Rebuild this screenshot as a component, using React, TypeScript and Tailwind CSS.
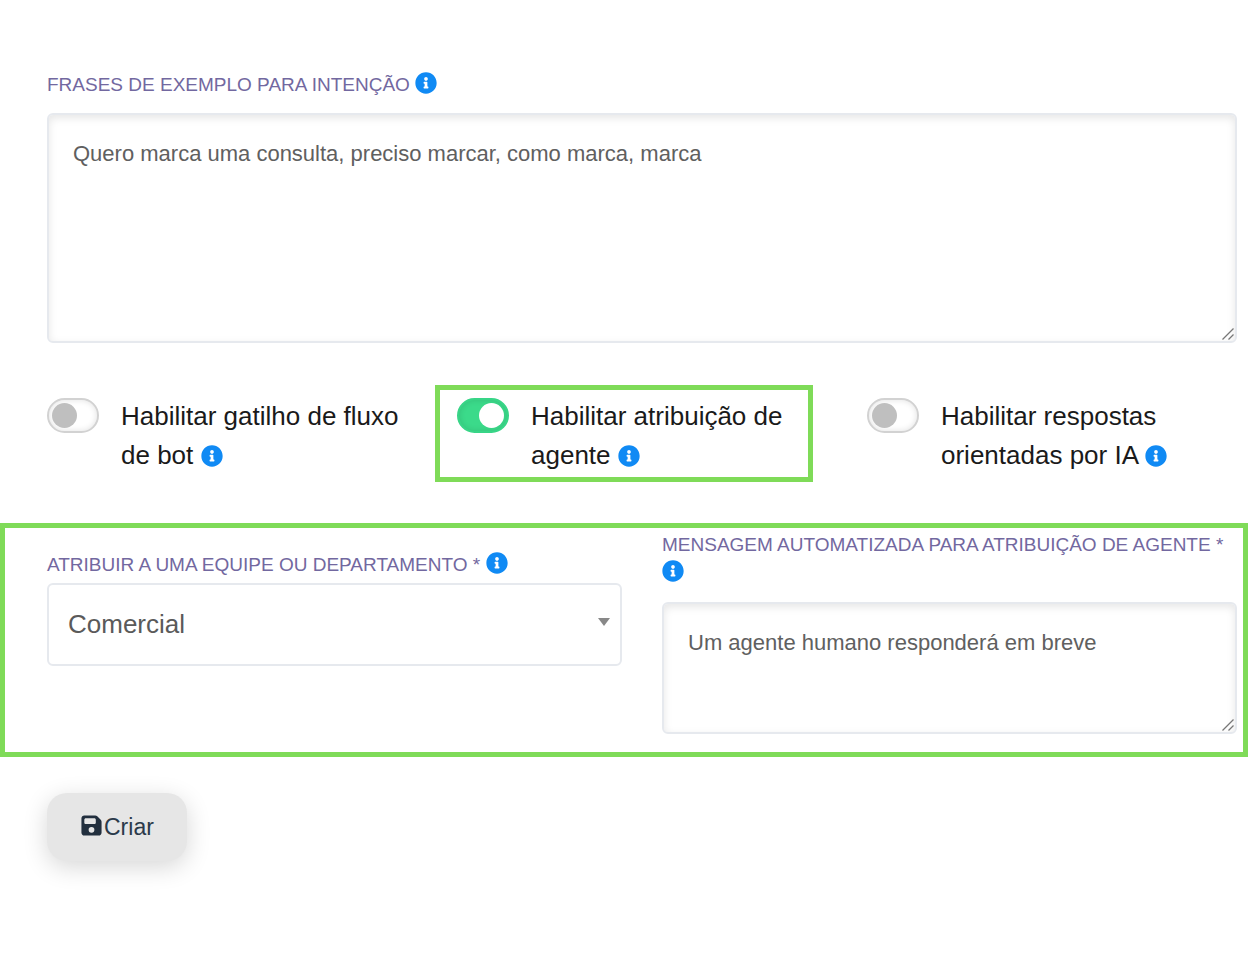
import { useState, type ReactNode } from "react";
import { FaInfoCircle } from "react-icons/fa";
import { FaFloppyDisk } from "react-icons/fa6";

function InfoIcon() {
  return (
    <FaInfoCircle
      aria-hidden="true"
      className="inline-block size-[22px] align-[-3px] text-[#108af4]"
    />
  );
}

interface FieldLabelProps {
  htmlFor: string;
  className?: string;
  children: ReactNode;
}

function FieldLabel({ htmlFor, className = "", children }: FieldLabelProps) {
  return (
    <label
      htmlFor={htmlFor}
      className={`block text-[19px] leading-7 text-[#7268a0] uppercase ${className}`}
    >
      {children} <InfoIcon />
    </label>
  );
}

interface MessageBoxProps {
  id: string;
  defaultValue: string;
  className: string;
}

function MessageBox({ id, defaultValue, className }: MessageBoxProps) {
  return (
    <div className="relative">
      <textarea
        id={id}
        defaultValue={defaultValue}
        spellCheck={false}
        className={`
          block w-full resize-y rounded-md border-2 border-[#e6e9ee] bg-white
          px-6 py-5 text-[22px] leading-[38px] text-[#606060] outline-none
          shadow-[inset_0_3px_8px_rgba(0,0,0,0.1)]
          [&::-webkit-resizer]:hidden
          ${className}
        `}
      />
      {/* Resize grip */}
      <svg
        viewBox="0 0 12 12"
        aria-hidden="true"
        className="pointer-events-none absolute right-[3px] bottom-[3px] size-3 stroke-[#777]"
      >
        <path d="M0.5 11.5 11.5 0.5M6.5 11.5 11.5 6.5" strokeWidth="1.3" fill="none" />
      </svg>
    </div>
  );
}

interface ToggleProps {
  id: string;
  label: string;
  checked: boolean;
  highlighted?: boolean;
  onChange: (checked: boolean) => void;
}

function Toggle({ id, label, checked, highlighted, onChange }: ToggleProps) {
  return (
    <div className="relative flex items-start">
      {/* Frame around the step being explained */}
      {highlighted && (
        <div className="pointer-events-none absolute -top-3 right-3.5 -bottom-[7px] -left-[22px] border-5 border-[#7fdb58]" />
      )}
      <input
        id={id}
        type="checkbox"
        checked={checked}
        onChange={(e) => onChange(e.target.checked)}
        className="
          mt-px flex h-[35px] w-[52px] shrink-0 appearance-none items-center
          rounded-full border-2 border-[#d2d2d2] bg-white px-[3px]
          shadow-[inset_0_0_6px_rgba(0,0,0,0.12)]
          before:size-[25px] before:rounded-full before:bg-[#bfbfbf] before:content-['']
          checked:justify-end checked:border-[#38d587] checked:bg-[#3bda8a]
          checked:before:bg-white
        "
      />
      <label htmlFor={id} className="ml-[22px] text-[26px] leading-[39px] text-[#1a1a1a]">
        {label} <InfoIcon />
      </label>
    </div>
  );
}

export default function App() {
  const [botFlow, setBotFlow] = useState(false);
  const [assignAgent, setAssignAgent] = useState(true);
  const [aiReplies, setAiReplies] = useState(false);

  return (
    <form
      onSubmit={(e) => e.preventDefault()}
      className="min-h-screen bg-white pt-[71px] pb-16 font-['Liberation_Sans',Arial,sans-serif]"
    >
      <div className="pr-[11px] pl-[47px]">
        <FieldLabel htmlFor="phrases" className="mb-3.5">
          Frases de exemplo para intenção
        </FieldLabel>
        <MessageBox
          id="phrases"
          defaultValue="Quero marca uma consulta, preciso marcar, como marca, marca"
          className="h-[230px]"
        />

        <div className="mt-[54px] grid grid-cols-3 gap-10">
          <Toggle
            id="bot-flow"
            label="Habilitar gatilho de fluxo de bot"
            checked={botFlow}
            onChange={setBotFlow}
          />
          <Toggle
            id="assign-agent"
            label="Habilitar atribuição de agente"
            checked={assignAgent}
            highlighted
            onChange={setAssignAgent}
          />
          <Toggle
            id="ai-replies"
            label="Habilitar respostas orientadas por IA"
            checked={aiReplies}
            onChange={setAiReplies}
          />
        </div>
      </div>

      <div className="mt-12 grid grid-cols-2 gap-10 border-5 border-[#7fdb58] pt-[3px] pr-1.5 pb-[18px] pl-[42px]">
        <div className="pt-5">
          <FieldLabel htmlFor="team" className="mb-1">
            Atribuir a uma equipe ou departamento *
          </FieldLabel>
          <div className="relative">
            <select
              id="team"
              defaultValue="comercial"
              className="
                block h-[83px] w-full appearance-none rounded-md border-2 border-[#e6e9ee]
                bg-white px-[19px] text-[26px] text-[#5a5a5a] outline-none
              "
            >
              <option value="comercial">Comercial</option>
              <option value="suporte">Suporte</option>
            </select>
            <svg
              viewBox="0 0 12 8"
              aria-hidden="true"
              className="pointer-events-none absolute top-[35px] right-3 h-2 w-3 fill-[#888]"
            >
              <path d="M0 0h12L6 8z" />
            </svg>
          </div>
        </div>

        <div>
          <FieldLabel htmlFor="auto-message" className="mb-[15px]">
            Mensagem automatizada para atribuição de agente *
          </FieldLabel>
          <MessageBox
            id="auto-message"
            defaultValue="Um agente humano responderá em breve"
            className="h-[132px]"
          />
        </div>
      </div>

      <button
        type="submit"
        className="
          mt-9 ml-[47px] flex h-[68px] items-center rounded-[20px] bg-[#e6e6e6] px-[33px]
          text-[23px] text-[#2b3a4a] shadow-[0_6px_24px_rgba(0,0,0,0.16)]
        "
      >
        <FaFloppyDisk aria-hidden="true" className="mr-px mb-1 size-[23px] text-[#222f3e]" />
        Criar
      </button>
    </form>
  );
}
